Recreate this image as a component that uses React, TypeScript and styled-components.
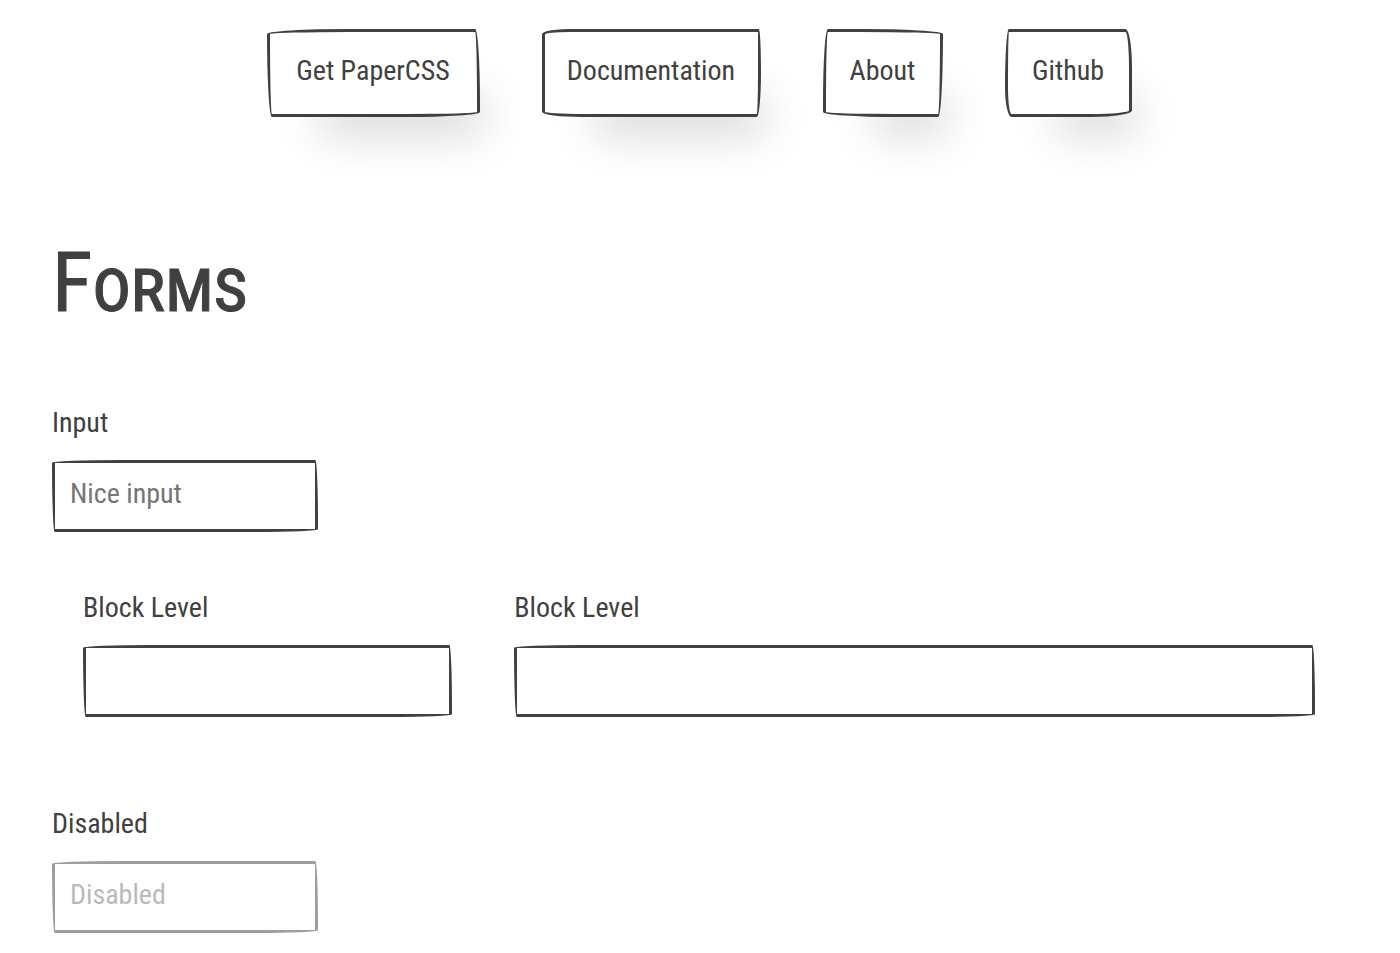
import React from "react";
import styled, { createGlobalStyle, css } from "styled-components";

const ink = "#41403e";

const GlobalStyle = createGlobalStyle`
  *, *::before, *::after { box-sizing: border-box; }
  body {
    margin: 0;
    background: #fff;
    color: ${ink};
    font-family: "Roboto Condensed", Lato, sans-serif;
    font-size: 28px;
    line-height: 36px;
  }
`;

const sketchBorders = {
  one: css`border-radius: 255px 15px 225px 15px / 15px 225px 15px 255px;`,
  two: css`border-radius: 125px 10px 20px 185px / 25px 205px 205px 25px;`,
  three: css`border-radius: 15px 255px 15px 225px / 225px 15px 255px 15px;`,
  four: css`border-radius: 15px 25px 155px 25px / 225px 150px 25px 115px;`,
  field: css`border-radius: 255px 10px 225px 10px / 10px 225px 10px 255px;`,
};

type Sketch = keyof typeof sketchBorders;

const Page = styled.div`
  padding: 29px 54px 20px 52px;
`;

const Nav = styled.nav`
  display: flex;
  flex-wrap: wrap;
  justify-content: center;
  gap: 62px;
`;

const NavButton = styled.button<{ $sketch: Sketch; $width: number }>`
  min-width: ${({ $width }) => $width}px;
  padding: 21px 15px 25px;
  border: 3px solid ${ink};
  background: #fff;
  color: inherit;
  font: inherit;
  box-shadow: 28px 42px 45px -25px rgba(0, 0, 0, 0.17);
  cursor: pointer;
  ${({ $sketch }) => sketchBorders[$sketch]}
`;

const Title = styled.h1`
  margin: 114px 0 0;
  font-size: 74px;
  font-weight: 400;
  line-height: 104px;
  font-variant: small-caps;
  -webkit-text-stroke: 1px ${ink};

  &::first-letter {
    font-size: 84px;
  }
`;

const Form = styled.form`
  margin-top: 67px;
`;

const Field = styled.div`
  display: flex;
  flex-direction: column;
  align-items: flex-start;
  gap: 19px;
`;

const Row = styled.div`
  display: grid;
  grid-template-columns: 1fr 2fr;
  margin: 58px 0 89px;
`;

const Column = styled.div`
  min-width: 0;
  padding: 0 31px;
`;

const TextInput = styled.input<{ $block?: boolean }>`
  width: ${({ $block }) => ($block ? "100%" : "266px")};
  height: 72px;
  padding: 12px 15px 18px;
  border: 3px solid ${ink};
  background: transparent;
  color: inherit;
  font: inherit;
  outline: none;
  ${sketchBorders.field}

  &::placeholder {
    color: #757575;
    opacity: 1;
  }

  &:disabled {
    opacity: 0.5;
  }
`;

const links: { label: string; sketch: Sketch; width: number }[] = [
  { label: "Get PaperCSS", sketch: "one", width: 213 },
  { label: "Documentation", sketch: "two", width: 219 },
  { label: "About", sketch: "three", width: 120 },
  { label: "Github", sketch: "four", width: 127 },
];

export default function App() {
  return (
    <>
      <GlobalStyle />
      <Page>
        <Nav>
          {links.map(({ label, sketch, width }) => (
            <NavButton key={label} type="button" $sketch={sketch} $width={width}>
              {label}
            </NavButton>
          ))}
        </Nav>
        <main>
          <Title>Forms</Title>
          <Form>
            <Field>
              <label htmlFor="nice-input">Input</label>
              <TextInput id="nice-input" type="text" placeholder="Nice input" />
            </Field>
            <Row>
              <Column>
                <Field>
                  <label htmlFor="block-narrow">Block Level</label>
                  <TextInput id="block-narrow" type="text" $block />
                </Field>
              </Column>
              <Column>
                <Field>
                  <label htmlFor="block-wide">Block Level</label>
                  <TextInput id="block-wide" type="text" $block />
                </Field>
              </Column>
            </Row>
            <Field>
              <label htmlFor="disabled-input">Disabled</label>
              <TextInput id="disabled-input" type="text" placeholder="Disabled" disabled />
            </Field>
          </Form>
        </main>
      </Page>
    </>
  );
}
